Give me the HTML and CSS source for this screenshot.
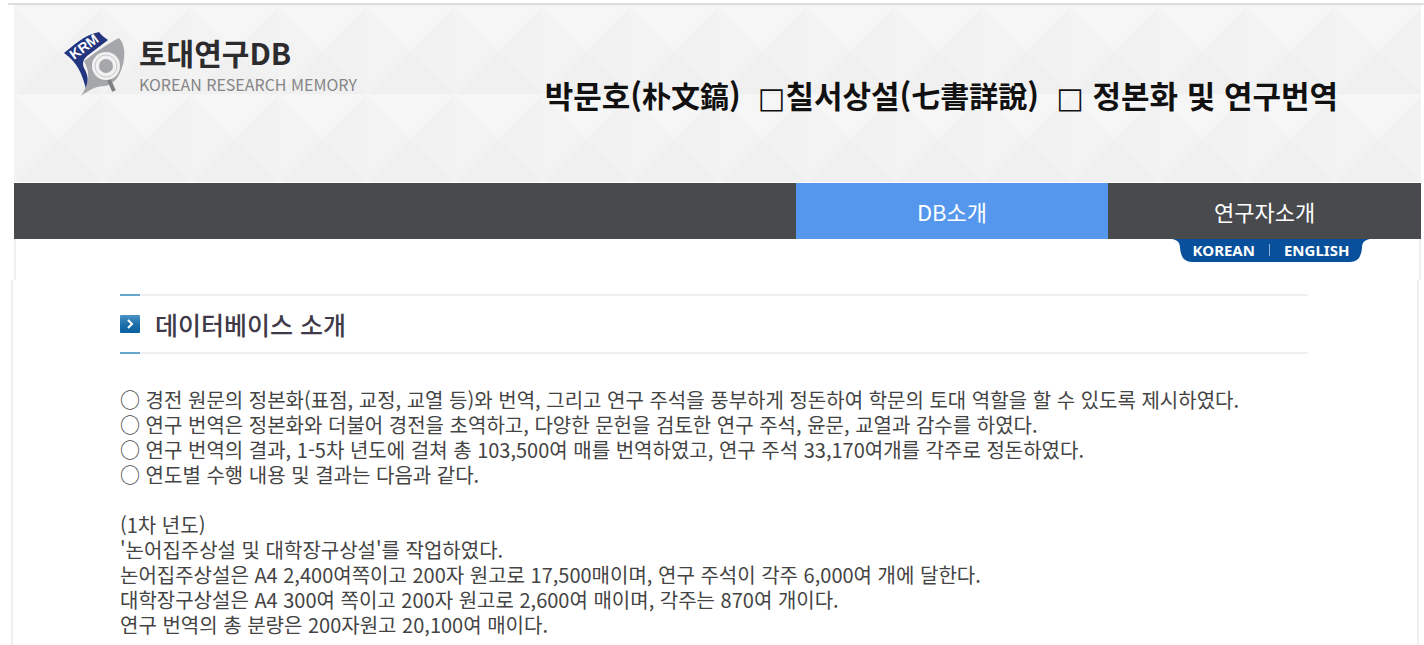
FILE: index.html
```html
<!DOCTYPE html>
<html lang="ko">
<head>
<meta charset="utf-8">
<title>토대연구DB</title>
<link rel="stylesheet" href="styles.css">
</head>
<body>
<div class="page">
  <div class="top">
    <header class="banner">
      <a class="logo" href="#">
        <svg class="logo-mark" viewBox="0 0 64 68" aria-hidden="true">
          <path d="M2 23C11 16 22 5 37 2C39 5 42 7 46 10L25 26C21 30 20 33 22 38C26 45 27 51 24 59C20 43 15 32 2 23Z" fill="#23357f"/>
          <path d="M22 31C34 22 47 13 57 8C64 15 64 30 58 43C55 50 49 55 43 56C34 56 27 60 19 66C27 54 29 44 22 31Z" fill="#a6a7aa"/>
          <circle cx="44" cy="36" r="14" fill="#f1f1f2"/>
          <circle cx="44" cy="36" r="11" fill="none" stroke="#c6c7c9" stroke-width="1"/>
          <circle cx="44" cy="36" r="7" fill="#a6a7aa"/>
          <path d="M47 50L52 61" stroke="#7d7f83" stroke-width="4"/>
          <text class="logo-initials" x="12" y="30" transform="rotate(-36 12 30)">KRM</text>
        </svg>
        <span class="logo-words">
          <span class="logo-name">토대연구DB</span>
          <span class="logo-sub">KOREAN RESEARCH MEMORY</span>
        </span>
      </a>
      <h1 class="title">박문호(<span class="hanja">朴文鎬</span>)&nbsp; <span class="box">□</span>칠서상설(<span class="hanja">七書詳說</span>)&nbsp; <span class="box">□</span> 정본화 및 연구번역</h1>
    </header>
    <nav class="menu">
      <a class="menu-item menu-item-active" href="#">DB소개</a>
      <a class="menu-item" href="#">연구자소개</a>
    </nav>
    <div class="subbar">
      <div class="lang">
        <svg class="lang-shape" viewBox="0 0 198 23" preserveAspectRatio="none" aria-hidden="true"><path d="M0 0C6 1 8 4 8 9Q9 23 20 23H178Q189 23 190 9C190 4 192 1 198 0Z" fill="#08509b"/></svg>
        <div class="lang-links"><a href="#">KOREAN</a><span class="lang-divider"></span><a href="#">ENGLISH</a></div>
      </div>
    </div>
  </div>
  <main class="content">
    <div class="section-head">
      <svg class="section-icon" viewBox="0 0 20 18" aria-hidden="true">
        <defs><linearGradient id="blue" x2="0" y2="1"><stop offset="0" stop-color="#4b94c4"/><stop offset=".5" stop-color="#1f70ab"/><stop offset="1" stop-color="#085f9f"/></linearGradient></defs>
        <rect width="20" height="18" rx="1" fill="url(#blue)"/>
        <path d="M8 5L12 9L8 13" fill="none" stroke="#fff" stroke-width="2"/>
      </svg>
      <h2 class="section-title">데이터베이스 소개</h2>
    </div>
    <div class="article">
      <p>○ 경전 원문의 정본화(표점, 교정, 교열 등)와 번역, 그리고 연구 주석을 풍부하게 정돈하여 학문의 토대 역할을 할 수 있도록 제시하였다.</p>
      <p>○ 연구 번역은 정본화와 더불어 경전을 초역하고, 다양한 문헌을 검토한 연구 주석, 윤문, 교열과 감수를 하였다.</p>
      <p>○ 연구 번역의 결과, 1-5차 년도에 걸쳐 총 103,500여 매를 번역하였고, 연구 주석 33,170여개를 각주로 정돈하였다.</p>
      <p>○ 연도별 수행 내용 및 결과는 다음과 같다.</p>
      <p class="year">(1차 년도)</p>
      <p>'논어집주상설 및 대학장구상설'를 작업하였다.</p>
      <p>논어집주상설은 A4 2,400여쪽이고 200자 원고로 17,500매이며, 연구 주석이 각주 6,000여 개에 달한다.</p>
      <p>대학장구상설은 A4 300여 쪽이고 200자 원고로 2,600여 매이며, 각주는 870여 개이다.</p>
      <p>연구 번역의 총 분량은 200자원고 20,100여 매이다.</p>
    </div>
  </main>
</div>
</body>
</html>
```
FILE: styles.css
```css
* {
  box-sizing: border-box;
}

body {
  margin: 0;
  background: #fff;
  color: #444;
  font-family: "Noto Sans CJK KR", sans-serif;
}

a {
  color: inherit;
  text-decoration: none;
}

h1, h2, p {
  margin: 0;
}

.page {
  display: flex;
  flex-direction: column;
  min-height: 100vh;
  padding-top: 3px;
}

.top {
  margin-left: 8px;
  padding: 0 3px 0 6px;
  border-top: 2px solid #dedede;
}

.banner {
  display: flex;
  justify-content: space-between;
  align-items: flex-start;
  min-height: 178px;
  padding: 25px 83px 0 48px;
  border-bottom: 1px solid #fff;
  background: conic-gradient(from 45deg, #f2f2f2 25%, #f0f0f0 0 50%, #f3f3f3 0 75%, #f6f6f6 0) left bottom / 88px 88px;
}

.logo {
  display: flex;
  gap: 13px;
}

.logo-mark {
  width: 64px;
  height: 68px;
}

.logo-initials {
  fill: #fff;
  font: bold 14px "Liberation Sans", sans-serif;
}

.logo-words {
  display: flex;
  flex-direction: column;
}

.logo-name {
  color: #2c2c2e;
  font-size: 30px;
  font-weight: 700;
  line-height: 44px;
}

.logo-sub {
  color: #858587;
  font-size: 16px;
  line-height: 20px;
}

.title {
  padding-top: 42px;
  color: #111;
  font-size: 31px;
  font-weight: 700;
  line-height: 46px;
  white-space: nowrap;
}

.hanja {
  font-size: 29px;
}

.box {
  font-family: "DejaVu Sans", sans-serif;
  font-size: 29px;
  font-weight: 400;
}

.menu {
  display: grid;
  grid-template-columns: 5fr 2fr 2fr;
  background: #494a4d;
}

.menu-item {
  color: #fff;
  font-size: 22px;
  line-height: 56px;
  text-align: center;
}

.menu-item-active {
  grid-column: 2;
  background: #5697ee;
}

.subbar {
  display: flex;
  justify-content: flex-end;
  min-height: 41px;
  padding-right: 49px;
  border: solid #efefef;
  border-width: 0 2px;
}

.lang {
  display: grid;
  width: 198px;
  height: 23px;
}

.lang-shape,
.lang-links {
  grid-area: 1 / 1;
  width: 100%;
  height: 100%;
}

.lang-links {
  z-index: 1;
  display: flex;
  justify-content: center;
  align-items: center;
  gap: 14px;
  padding-bottom: 2px;
  color: #fff;
  font: bold 15px/20px "Noto Sans", sans-serif;
}

.lang-divider {
  width: 1px;
  height: 12px;
  background: #8fb4dc;
}

.content {
  flex: 1;
  margin: 0 5px 0 11px;
  padding: 14px 109px 8px 107px;
  border: solid #efefef;
  border-width: 0 2px;
}

.section-head {
  display: flex;
  align-items: center;
  gap: 15px;
  height: 60px;
  border: solid #efefef;
  border-width: 2px 0;
  border-image: linear-gradient(90deg, #69a4cf 22px, #efefef 22px) 2;
}

.section-icon {
  width: 20px;
  height: 18px;
}

.section-title {
  color: #403a48;
  font-size: 25px;
  font-weight: 500;
  line-height: 32px;
}

.article {
  padding-top: 33px;
  font-size: 20px;
  line-height: 25px;
}

.year {
  padding-top: 25px;
}
```
